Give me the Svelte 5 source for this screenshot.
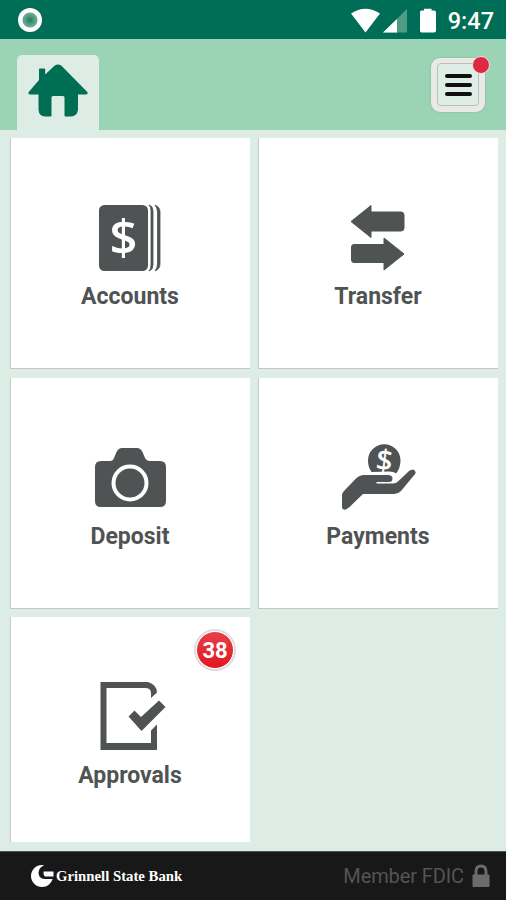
<script lang="ts">
  type Tile = { id: string; label: string; badge?: number };

  const tiles: Tile[] = [
    { id: "accounts", label: "Accounts" },
    { id: "transfer", label: "Transfer" },
    { id: "deposit", label: "Deposit" },
    { id: "payments", label: "Payments" },
    { id: "approvals", label: "Approvals", badge: 38 },
  ];

  let time = "9:47";
</script>

<div class="screen">
  <div class="status">
    <svg class="record" viewBox="0 0 24 24">
      <circle cx="12" cy="12" r="12" fill="#fff" />
      <circle cx="12" cy="12" r="7.6" fill="#62a78f" />
      <circle cx="12" cy="12" r="5" fill="#4a997f" />
      <circle cx="12" cy="12" r="2.6" fill="#2e8468" />
    </svg>
    <div class="system">
      <svg width="86" height="26" viewBox="0 0 86 26">
        <path d="M0 5.5Q14.5-4 29 5.5L14.5 24.5Z" fill="#fff" />
        <path d="M56 1V24.5H32Z" fill="#4f9c84" />
        <path d="M46 11V24.5H32Z" fill="#fff" />
        <path
          d="M70.500 2.500H73V.8H80.500V2.500H83Q85 2.500 85 4.500V22.500Q85 24.500 83 24.500H70.500Q69 24.500 69 22.500V4.500Q69 2.500 70.500 2.500Z"
          fill="#fff"
        />
      </svg>
      <span class="time">{time}</span>
    </div>
  </div>

  <header>
    <div class="tab">
      <svg width="60" height="53" viewBox="0 0 60 53">
        <path
          d="M11 16V5.200Q11 4.500 12 4.500H16.300Q17.200 4.500 17.200 5.500V10.500L26.500 1.800Q30 -1 33.500 1.800L59.300 28Q60.500 30.500 58 30.500H50V46Q49 52 43 52.500H37.500Q36.500 52.500 36.500 51.500V33.500Q36.500 32 35 32H25Q23.500 32 23.500 33.500V51.500Q23.500 52.500 22.500 52.500H17Q11 52 10.500 46V30.500H2Q-.5 30.500 .7 28Z"
          fill="#006e53"
        />
      </svg>
    </div>
    <button class="menu" aria-label="Menu">
      <span class="face">
        <i></i>
        <i></i>
        <i></i>
      </span>
      <span class="dot"></span>
    </button>
  </header>

  <main>
    {#each tiles as tile}
      <div class="tile">
        <svg class="icon" viewBox="0 0 80 76">
          {#if tile.id === "accounts"}
            <rect x="9" y="5" width="49" height="66" rx="5.500" />
            <path d="M59 5Q63 6 63 11V65Q63 70 59 71Q61 69 61 65V11Q61 7 59 5Z" class="sheet" />
            <path d="M65 5Q70 7 70 12V64Q70 69 65 71Q67.500 68 67.500 64V12Q67.500 8 65 5Z" class="sheet" />
            <text x="33.500" y="55" class="dollar" font-size="49">$</text>
          {:else if tile.id === "transfer"}
            <path d="M13 21.500L33 5.500V12H63Q66 12 66 15V28Q66 31 63 31H33V37.500Z" class="round" />
            <path d="M66 54L46 38V44.500H16Q13.500 44.500 13.500 47V60Q13.500 62.500 16 62.500H46V70Z" class="round" />
          {:else if tile.id === "deposit"}
            <path
              d="M11 21H20Q23 21 24 18L26.500 12Q28.500 8 32 8H47Q50.500 8 52.500 12L55 18Q56.500 21 59 21H70Q76 21 76 27V61Q76 67 70 67H11Q5 67 5 61V27Q5 21 11 21Z"
            />
            <circle cx="40" cy="43" r="16.500" fill="none" stroke="#fff" stroke-width="4" />
          {:else if tile.id === "payments"}
            <path d="M33.500 32Q30 27 30 20.500A16.250 16.250 0 0 1 62.500 20.500Q62.500 28 58 33.500Q56 31.500 51 31.500Z" />
            <text x="46.500" y="30.500" class="dollar" font-size="29" transform="rotate(7 46.500 20)">$</text>
            <path
              d="M4 55Q4 53 6 51L18 38.500Q21.500 35 26 35H50Q54.500 35 54.500 38.500Q54.500 42 51 42H38.500V43.500H55Q58 43.500 60 41.500L71 31Q73 29.500 75 29.500Q78 30 77.500 33.500L63 51Q60 54 56 54H25L11 67.500Q6 71.500 4 68Z"
            />
          {:else}
            <path d="M10.500 3H58Q67 6 67 13.500L61 19V14Q61 9 55 9H16.500V64H61V51.500L67 45.500V71H10.500Z" />
            <path d="M38.500 37.500L44.500 31.500L51 38L69 21.500L75.500 28L51.500 52Z" />
          {/if}
        </svg>
        <span class="label">{tile.label}</span>
        {#if tile.badge}
          <span class="badge">{tile.badge}</span>
        {/if}
      </div>
    {/each}
  </main>

  <footer>
    <div class="brand">
      <svg width="24" height="24" viewBox="0 0 24 24">
        <circle cx="12" cy="12" r="11" fill="#fff" />
        <path d="M16.500 0Q8.500 3 8.500 9Q9 15 15.500 15H24V0Z" fill="#181818" />
        <path d="M13.500 7.500H23.500V12.500H15Q13.500 12 13.500 7.500Z" fill="#fff" />
      </svg>
      <span>Grinnell State Bank</span>
    </div>
    <div class="member">
      <span>Member FDIC</span>
      <svg width="18" height="24" viewBox="0 0 18 24">
        <path d="M4 12V7.500Q4 2 9 2T14 7.500V12" fill="none" stroke="#6b6b6b" stroke-width="3" />
        <rect x=".5" y="10.500" width="17" height="12.500" rx="1" fill="#6b6b6b" />
      </svg>
    </div>
  </footer>
</div>

<style>
  :global(body) {
    margin: 0;
  }

  .screen {
    display: flex;
    flex-direction: column;
    width: 506px;
    height: 900px;
    overflow: hidden;
    background: #ddede5;
    font-family: Roboto, sans-serif;
  }

  .status {
    display: flex;
    justify-content: space-between;
    box-sizing: border-box;
    height: 39px;
    padding: 8px 12px 0 18px;
    background: #006e56;
  }

  .record {
    width: 24px;
    height: 24px;
  }

  .system {
    display: flex;
    gap: 11px;
  }

  .time {
    color: #fff;
    font-size: 23.500px;
    font-weight: 500;
    line-height: 27px;
  }

  header {
    display: flex;
    justify-content: space-between;
    box-sizing: border-box;
    height: 91px;
    padding: 16px 21px 0 17px;
    background: #9bd4b5;
  }

  .tab {
    box-sizing: border-box;
    width: 82px;
    height: 75px;
    padding: 9px 0 0 11px;
    border-radius: 5px 5px 0 0;
    background: #ddede5;
  }

  .menu {
    position: relative;
    box-sizing: border-box;
    width: 54px;
    height: 54px;
    margin-top: 3px;
    padding: 5px 6px 6px;
    border: none;
    border-radius: 9px;
    background: #e9e9e6;
    box-shadow: 0 0 2px #8aa498;
  }

  .face {
    display: flex;
    flex-direction: column;
    align-items: center;
    justify-content: center;
    gap: 5px;
    box-sizing: border-box;
    width: 42px;
    height: 43px;
    border: 1px solid #b9bfbb;
    border-radius: 4px;
    background: #deede5;
  }

  .face i {
    width: 27px;
    height: 4px;
    border-radius: 2px;
    background: #101010;
  }

  .dot {
    position: absolute;
    top: -2px;
    right: -5px;
    width: 16px;
    height: 16px;
    border: 1px solid #f2dfe0;
    border-radius: 50%;
    background: #de2840;
  }

  main {
    flex: 1;
    display: grid;
    grid-template-columns: 240px 240px;
    grid-template-rows: 231px 231px 225px;
    gap: 8.500px 8px;
    padding: 8px 0 0 10px;
  }

  .tile {
    position: relative;
    display: flex;
    flex-direction: column;
    align-items: center;
    box-sizing: border-box;
    padding-top: 62px;
    background: #fff;
    box-shadow:
      inset 1px 0 #c6cac8,
      inset 0 -1px #c6c6c6;
  }

  .tile:last-child {
    box-shadow: inset 1px 0 #c6cac8;
  }

  .icon {
    width: 80px;
    height: 76px;
    fill: #505353;
  }

  .round {
    stroke: #505353;
    stroke-width: 1;
    stroke-linejoin: round;
  }

  .sheet {
    stroke: #505353;
    stroke-width: 0.8;
  }

  .dollar {
    fill: #fff;
    font-family: "Open Sans", sans-serif;
    font-weight: 600;
    text-anchor: middle;
  }

  .label {
    margin-top: 6px;
    color: #505353;
    font-size: 23px;
    font-weight: 700;
    line-height: 29px;
  }

  .badge {
    position: absolute;
    top: 14px;
    right: 16px;
    width: 36px;
    height: 36px;
    border: 1px solid #fff;
    border-radius: 50%;
    background: linear-gradient(#e84049, #e31520);
    box-shadow: 0 0 0 2px #dcdcdc;
    color: #fff;
    font-size: 22px;
    font-weight: 700;
    line-height: 37px;
    text-align: center;
  }

  footer {
    display: flex;
    align-items: center;
    justify-content: space-between;
    box-sizing: border-box;
    height: 49px;
    padding: 0 16px 0 30px;
    border-top: 1px solid #515653;
    background: #181818;
  }

  .brand {
    display: flex;
    align-items: center;
    gap: 2px;
    color: #fff;
    font-family: "Liberation Serif", serif;
    font-size: 14.750px;
    font-weight: 700;
  }

  .member {
    display: flex;
    align-items: center;
    gap: 8px;
    color: #545454;
    font-size: 20px;
  }

  .member span {
    letter-spacing: -0.1px;
  }
</style>
